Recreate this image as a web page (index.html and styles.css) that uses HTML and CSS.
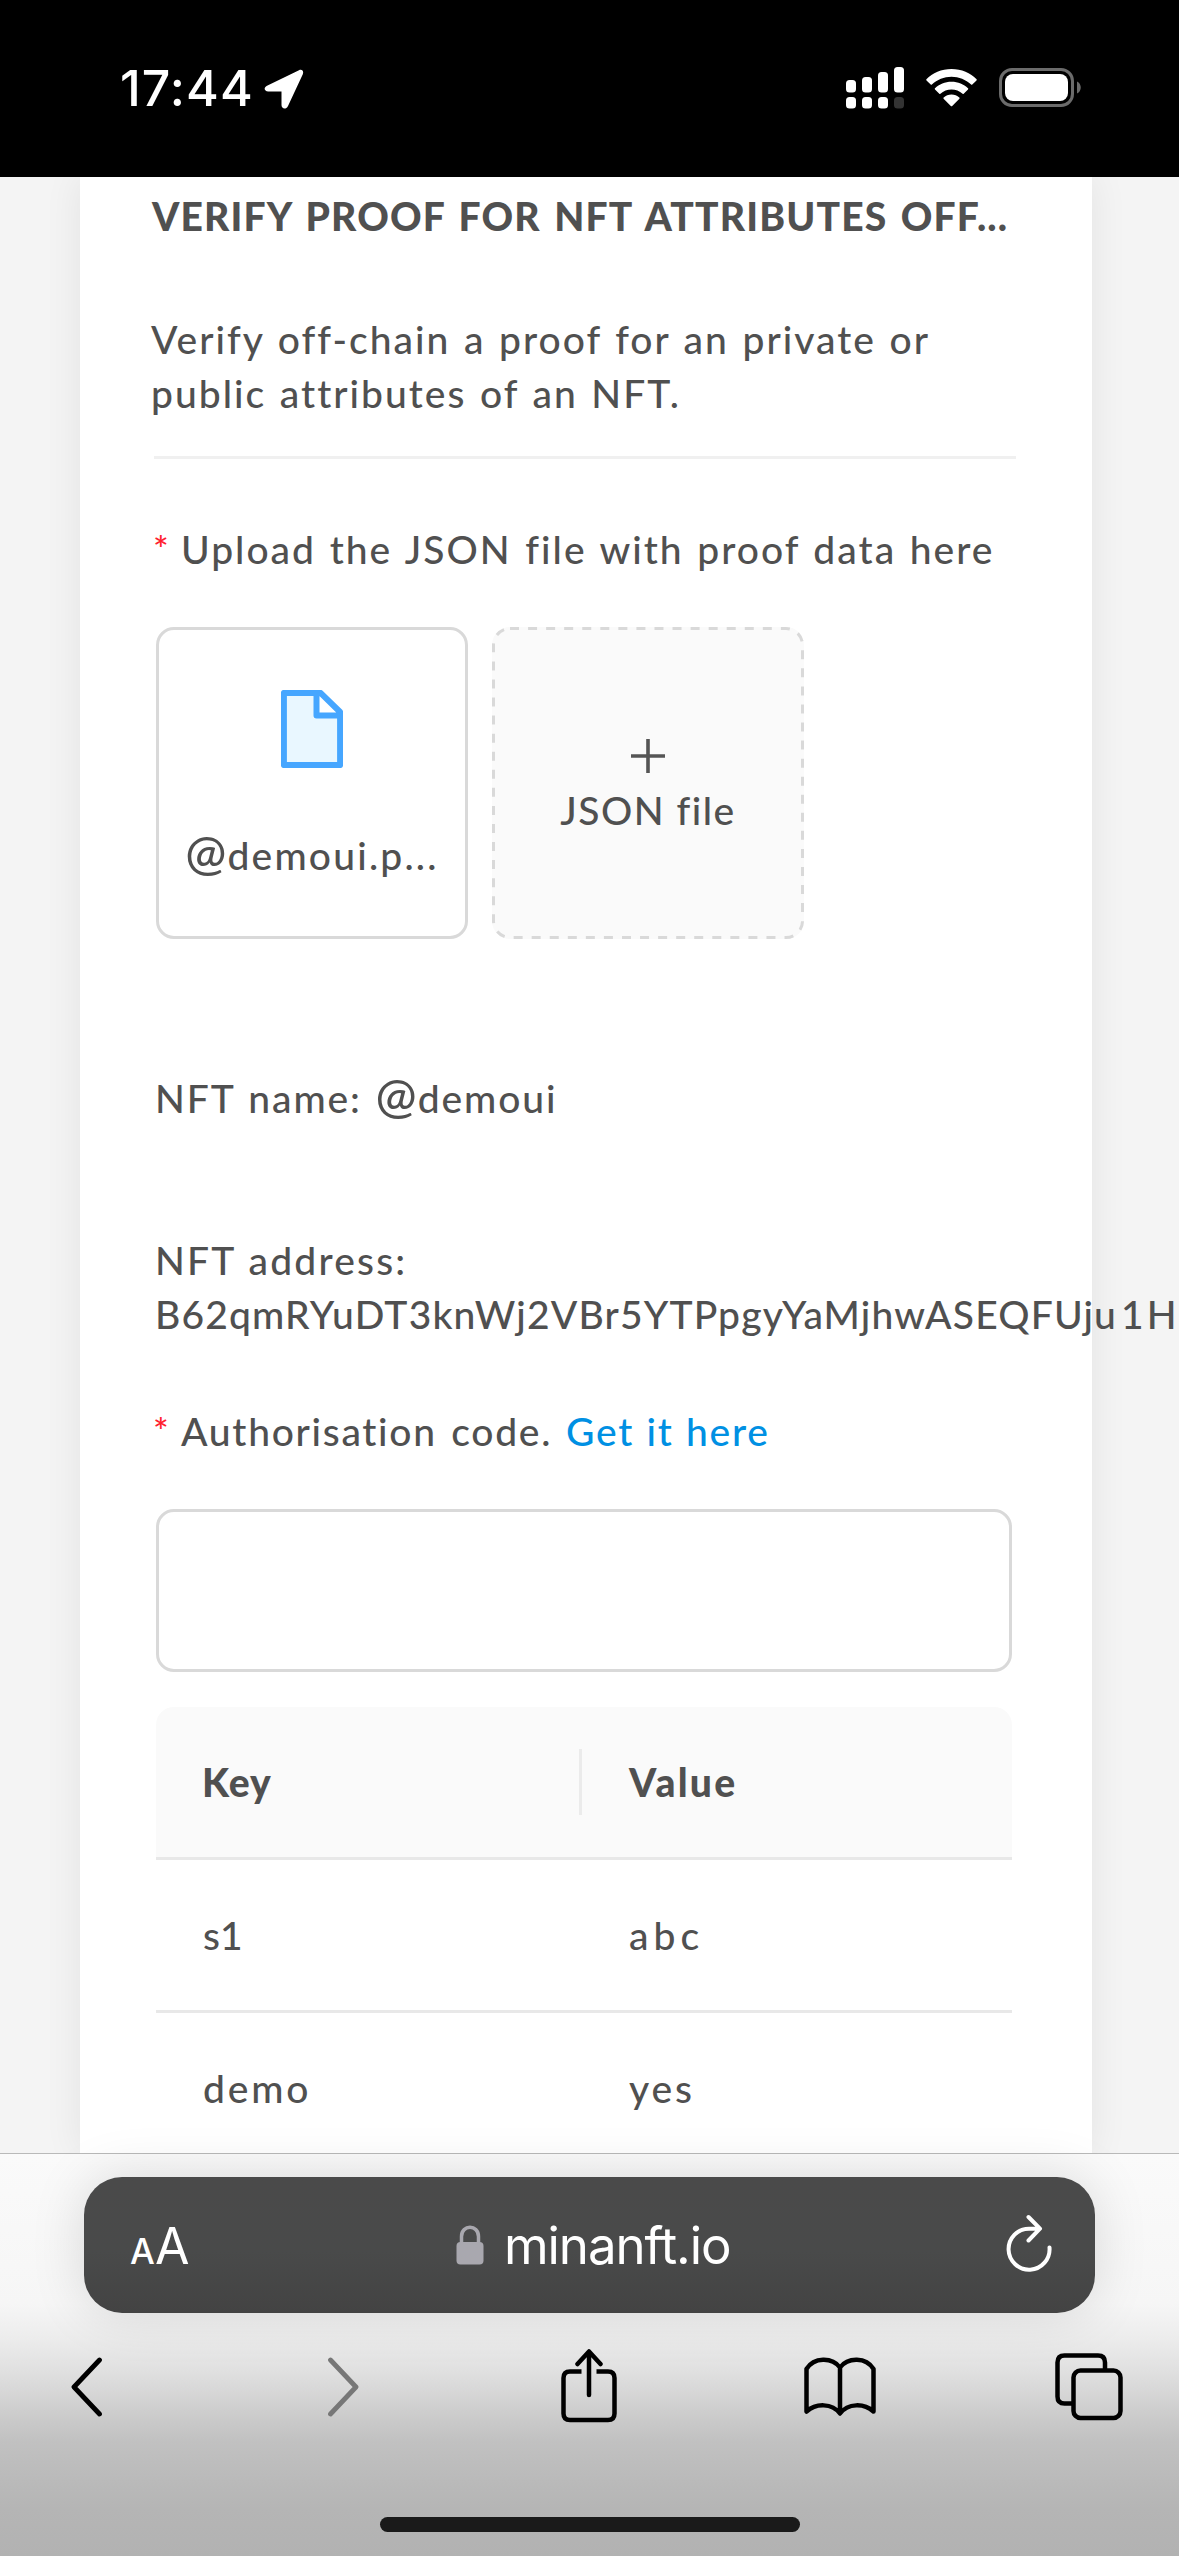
FILE: index.html
```html
<!DOCTYPE html>
<html lang="en">
<head>
<meta charset="utf-8">
<title>minanft.io</title>
<link rel="stylesheet" href="styles.css">
</head>
<body>
<div class="screen">
  <header class="status">
    <div class="status-left">
      <span class="time">17:44</span>
      <svg class="location" width="40" height="40" viewBox="0 0 40 40"><path d="M35 1.2 3 16.8C-.8 18.7.3 22.5 4.200 22.5H17.500V36C17.500 40 22 41 24 37L38.800 5.200C40 2 38 0 35 1.200Z" fill="#fff"/></svg>
    </div>
    <div class="status-right">
      <svg width="58" height="42" viewBox="0 0 58 42" fill="#fff">
        <rect x="0" y="13" width="10" height="12.500" rx="3.500"/><rect x="16" y="10" width="10" height="15.500" rx="3.500"/><rect x="32" y="5" width="10" height="20.500" rx="3.500"/><rect x="48" y="0" width="10" height="25.500" rx="3.500"/>
        <rect x="0" y="30" width="10" height="11.500" rx="3.500"/><rect x="16" y="30" width="10" height="11.500" rx="3.500"/><rect x="32" y="30" width="10" height="11.500" rx="3.500"/><rect x="48" y="30" width="10" height="11.500" rx="3.500" fill="#333"/>
      </svg>
      <svg class="wifi" width="51" height="38" viewBox="0 0 51 38" fill="#fff">
        <path d="M25.500 0C35.500 0 44.500 4 50.600 10.300Q51 10.900 50.500 11.400L46.300 15.600Q45.700 16.100 45.100 15.600C39.800 10.600 33 7.800 25.500 7.800S11.200 10.600 5.900 15.600Q5.300 16.100 4.700 15.600L.5 11.400Q0 10.900.4 10.300C6.500 4 15.500 0 25.500 0Z"/>
        <path d="M25.500 12.800C32 12.800 37.800 15.300 42 19.300Q42.600 19.900 42 20.500L37.700 24.800Q37.200 25.300 36.600 24.800C33.500 22.100 29.700 20.600 25.500 20.600S17.500 22.100 14.400 24.800Q13.800 25.300 13.300 24.800L9 20.500Q8.400 19.900 9 19.300C13.200 15.300 19 12.800 25.500 12.800Z"/>
        <path d="M25.500 25.500C28.500 25.500 31.200 26.600 33.300 28.500Q34 29.100 33.400 29.700L26.200 37Q25.500 37.600 24.800 37L17.600 29.700Q17 29.100 17.700 28.500C19.800 26.600 22.500 25.500 25.500 25.500Z"/>
      </svg>
      <svg class="battery" width="83" height="39" viewBox="0 0 83 39">
        <rect x="1.500" y="1.500" width="72" height="36" rx="11.500" fill="none" stroke="#6b6b6b" stroke-width="3"/>
        <rect x="6" y="6" width="63" height="27" rx="8" fill="#fff"/>
        <path d="M78 13.500C83 15.500 83 23.500 78 25.500Z" fill="#6b6b6b"/>
      </svg>
    </div>
  </header>

  <main class="page">
    <section class="card">
      <h1 class="title">VERIFY PROOF FOR NFT ATTRIBUTES OFF...</h1>
      <p class="desc">Verify off-chain a proof for an private or<br>public attributes of an NFT.</p>
      <hr class="divider">
      <div class="label upload-label"><span class="req">*</span><span>Upload the JSON file with proof data here</span></div>
      <div class="uploads">
        <div class="tile file">
          <svg width="62" height="78" viewBox="0 0 62 78"><path d="M3 3H39L59 23V75H3Z" fill="#e9f7ff"/><path d="M37 3 59 25.500H35Z" fill="#fff"/><path d="M2.900 2.900H39.500L59.100 22V75.100H2.900ZM35.500 4V25.500H58" fill="none" stroke="#46a6ff" stroke-width="6" stroke-linejoin="round"/></svg>
          <span class="file-name"><span class="at">@</span>demoui.p...</span>
        </div>
        <div class="tile add">
          <svg class="dashes" width="312" height="312" viewBox="0 0 312 312"><rect x="1.500" y="1.500" width="309" height="309" rx="16.500" fill="none" stroke="#d9d9d9" stroke-width="3" stroke-dasharray="9 9.060"/></svg>
          <svg width="34" height="34" viewBox="0 0 34 34"><path d="M17 0V34M0 17H34" stroke="#555" stroke-width="3.600"/></svg>
          <span class="add-text">JSON file</span>
        </div>
      </div>
      <p class="nft-name">NFT name: <span class="at">@</span>demoui</p>
      <p class="nft-address">NFT address:<br><span class="address">B62qmRYuDT3knWj2VBr5YTPpgyYaMjhwASEQFUju<span class="one">1</span>Hk</span></p>
      <div class="label"><span class="req">*</span><span class="auth">Authorisation code. </span><a class="link">Get it here</a></div>
      <div class="input"></div>
      <div class="table">
        <div class="row head"><div class="cell">Key</div><div class="cell value">Value</div></div>
        <div class="row"><div class="cell s1">s1</div><div class="cell abc">abc</div></div>
        <div class="row"><div class="cell">demo</div><div class="cell">yes</div></div>
      </div>
    </section>
  </main>

  <footer class="browser">
    <div class="urlbar">
      <div class="aa"><span class="a-small">A</span><span class="a-big">A</span></div>
      <div class="host">
        <svg class="lock" width="28" height="40" viewBox="0 0 28 40"><path d="M5.500 20V11.500C5.500-.7 22.500-.7 22.500 11.500V20" fill="none" stroke="#a9a8af" stroke-width="3.500"/><rect x=".5" y="17" width="27" height="22.500" rx="4" fill="#a9a8af"/></svg>
        <span class="domain">minanft.io</span>
      </div>
      <svg class="reload" width="46" height="62" viewBox="0 0 46 62" fill="none" stroke="#fff" stroke-width="4" stroke-linecap="round" stroke-linejoin="round"><path d="M43.500 34.500A20.500 20.500 0 1 1 23 15.700H33M22.500 4 34 15.700 22.500 27.500"/></svg>
    </div>
    <nav class="tools">
      <svg width="32" height="64" viewBox="0 0 32 64"><path d="M29.500 5 4 32 29.500 59" fill="none" stroke="#000" stroke-width="4.800" stroke-linecap="round" stroke-linejoin="round"/></svg>
      <svg class="forward" width="32" height="64" viewBox="0 0 32 64"><path d="M2.500 5 28 32 2.500 59" fill="none" stroke="#777" stroke-width="4.800" stroke-linecap="round" stroke-linejoin="round"/></svg>
      <svg class="share" width="58" height="74" viewBox="0 0 58 74" fill="none" stroke="#000" stroke-width="4.500"><path d="M21.500 22.500H10Q3.500 22.500 3.500 29V64.500Q3.500 71 10 71H48Q54.500 71 54.500 64.500V29Q54.500 22.500 48 22.500H36.500"/><path d="M29 46V3M17.500 15 29 2.500 40.500 15" stroke-linecap="round" stroke-linejoin="round"/></svg>
      <svg class="book" width="72" height="60" viewBox="0 0 72 60" fill="none" stroke="#000" stroke-width="4.500" stroke-linejoin="round"><path d="M36 56.500C28 46 12 46 2.500 54.500V12C10 0 28 0 36 10.500C44 0 62 0 69.500 12V54.500C60 46 44 46 36 56.500ZM36 10.500V56"/></svg>
      <svg class="tabs" width="68" height="68" viewBox="0 0 68 68" fill="none" stroke="#000" stroke-width="4.500"><rect x="18.500" y="17.500" width="47" height="47.500" rx="7"/><path d="M50 17V9.500Q50 2.500 43 2.500H9.500Q2.500 2.500 2.500 9.500V43.500Q2.500 50.500 9.500 50.500H18"/></svg>
    </nav>
    <div class="home"></div>
  </footer>
</div>
</body>
</html>
```
FILE: styles.css
```css
* { box-sizing: border-box; }
body { margin: 0; }
svg { display: block; flex: none; }
p, h1 { margin: 0; }

.screen {
  width: 1179px;
  height: 2556px;
  display: flex;
  flex-direction: column;
  overflow: hidden;
  font: 500 39px/54px Lato, sans-serif;
  color: #505050;
  letter-spacing: 2px;
  white-space: nowrap;
}

/* Status bar */
.status {
  height: 177px;
  flex: none;
  position: relative;
  z-index: 1;
  background: #000;
  color: #fff;
  display: flex;
  justify-content: space-between;
  padding: 67px 97px 0 120px;
}
.status-left, .status-right { display: flex; align-items: flex-start; }
.time { font: 500 50px/42px Inter, sans-serif; letter-spacing: 1.1px; width: 144px; }
.location { margin-top: 2px; }
.wifi { margin: 2px 22px 0 22px; }
.battery { margin-top: 1px; }

/* Page content */
.page {
  height: 1976px;
  flex: none;
  background: #f4f4f4;
  padding: 0 87px 0 80px;
}
.card {
  height: 1976px;
  background: #fff;
  box-shadow: 0 0 36px rgba(0, 0, 0, .075);
  padding: 12px 80px 0 76px;
}
.title {
  margin-left: -4px;
  font-size: 39px;
  font-weight: 900;
  line-height: 54px;
  letter-spacing: 1.17px;
  word-spacing: 3px;
}
.desc { margin: 69px 0 0 -5px; word-spacing: 1.8px; }
.divider { margin: 36px -4px 0 -2px; border: 0; height: 3px; background: #f0f0f0; }
.label { display: flex; margin-left: -3px; word-spacing: 1.8px; }
.upload-label { margin-top: 63px; }
.req { width: 26px; color: #ff1f2f; font-size: 37px; line-height: 53px; height: 54px; }
.label .req + span { margin-left: 2px; }

.uploads { display: flex; gap: 24px; margin-top: 51px; }
.tile {
  width: 312px;
  height: 312px;
  border: 3px solid #d9d9d9;
  border-radius: 18px;
  display: flex;
  flex-direction: column;
  align-items: center;
}
.file { padding-top: 60px; }
.file-name { margin-top: 60px; letter-spacing: 2.2px; }
.at { font-size: 49px; line-height: 0; letter-spacing: 1px; }
.add { background: #fafafa; border: 0; padding-top: 112px; position: relative; }
.dashes { position: absolute; left: 0; top: 0; }
.add-text { margin-top: 10px; letter-spacing: 1.5px; }

.nft-name { margin: 132px 0 0 -1px; letter-spacing: 1.9px; word-spacing: 2px; }
.nft-address { margin: 108px 0 63px -1px; letter-spacing: 2.2px; word-spacing: 1px; }
.address { letter-spacing: 1.15px; }
.one { margin: 0 2px 0 4px; }
.auth { letter-spacing: 1.7px; word-spacing: 3px; }
.link { color: #0090e3; margin-left: 14px; letter-spacing: 1.7px; word-spacing: 1px; }

.input { height: 163px; margin-top: 51px; border: 3px solid #d9d9d9; border-radius: 18px; }

.table { margin-top: 35px; }
.row { height: 153px; display: grid; grid-template-columns: 426px 430px; align-items: center; border-bottom: 3px solid #e8e8e8; }
.cell { padding-left: 47px; letter-spacing: 2.8px; }
.head { background: #fafafa; border-radius: 18px 18px 0 0; font-weight: 900; }
.head .cell { height: 66px; line-height: 66px; letter-spacing: 1px; }
.head .cell:first-child { padding-left: 46px; border-right: 3px solid #ebebeb; }
.head .value { letter-spacing: 2.2px; }
.s1 { letter-spacing: 0; }
.abc { letter-spacing: 5px; }

/* Browser chrome */
.browser {
  height: 403px;
  flex: none;
  position: relative;
  border-top: 1px solid #b9b9b9;
  background: linear-gradient(#fafafa 0, #f6f6f6 150px, #ececec 185px, #dedede 222px, #cfcfcf 254px, #c1c1c1 287px, #bbb 320px, #b5b5b5 354px, #b2b2b2 402px);
  padding: 23px 84px 0;
}
.urlbar {
  height: 136px;
  border-radius: 38px;
  background: linear-gradient(#4a4a4a, #494a4a 55%, #434343);
  box-shadow: 0 0 54px rgba(0, 0, 0, .13);
  color: #fff;
  display: grid;
  grid-template-columns: 372px 1fr 90px;
  font: 400 51px/60px Inter, sans-serif;
}
.aa { padding: 39px 0 0 46px; letter-spacing: 0; display: flex; align-items: baseline; }
.a-small { font-size: 35px; font-weight: 500; width: 25px; }
.a-big { font-size: 50px; }
.host { display: flex; padding-top: 39px; }
.lock { margin-top: 9px; }
.domain { margin-left: 20px; letter-spacing: -1.09px; }
.reload { margin: 36px 0 0 1px; }

.tools {
  display: flex;
  margin: 34px -30px 0 -14px;
  align-items: center;
  height: 80px;
}
.forward { margin-left: 226px; }
.share { margin: -3px 0 0 200px; }
.book { margin-left: 186px; }
.tabs { margin-left: 179px; }
.home { width: 420px; height: 15px; border-radius: 8px; background: #1a1a1a; margin: 90px 0 0 296px; }
```
